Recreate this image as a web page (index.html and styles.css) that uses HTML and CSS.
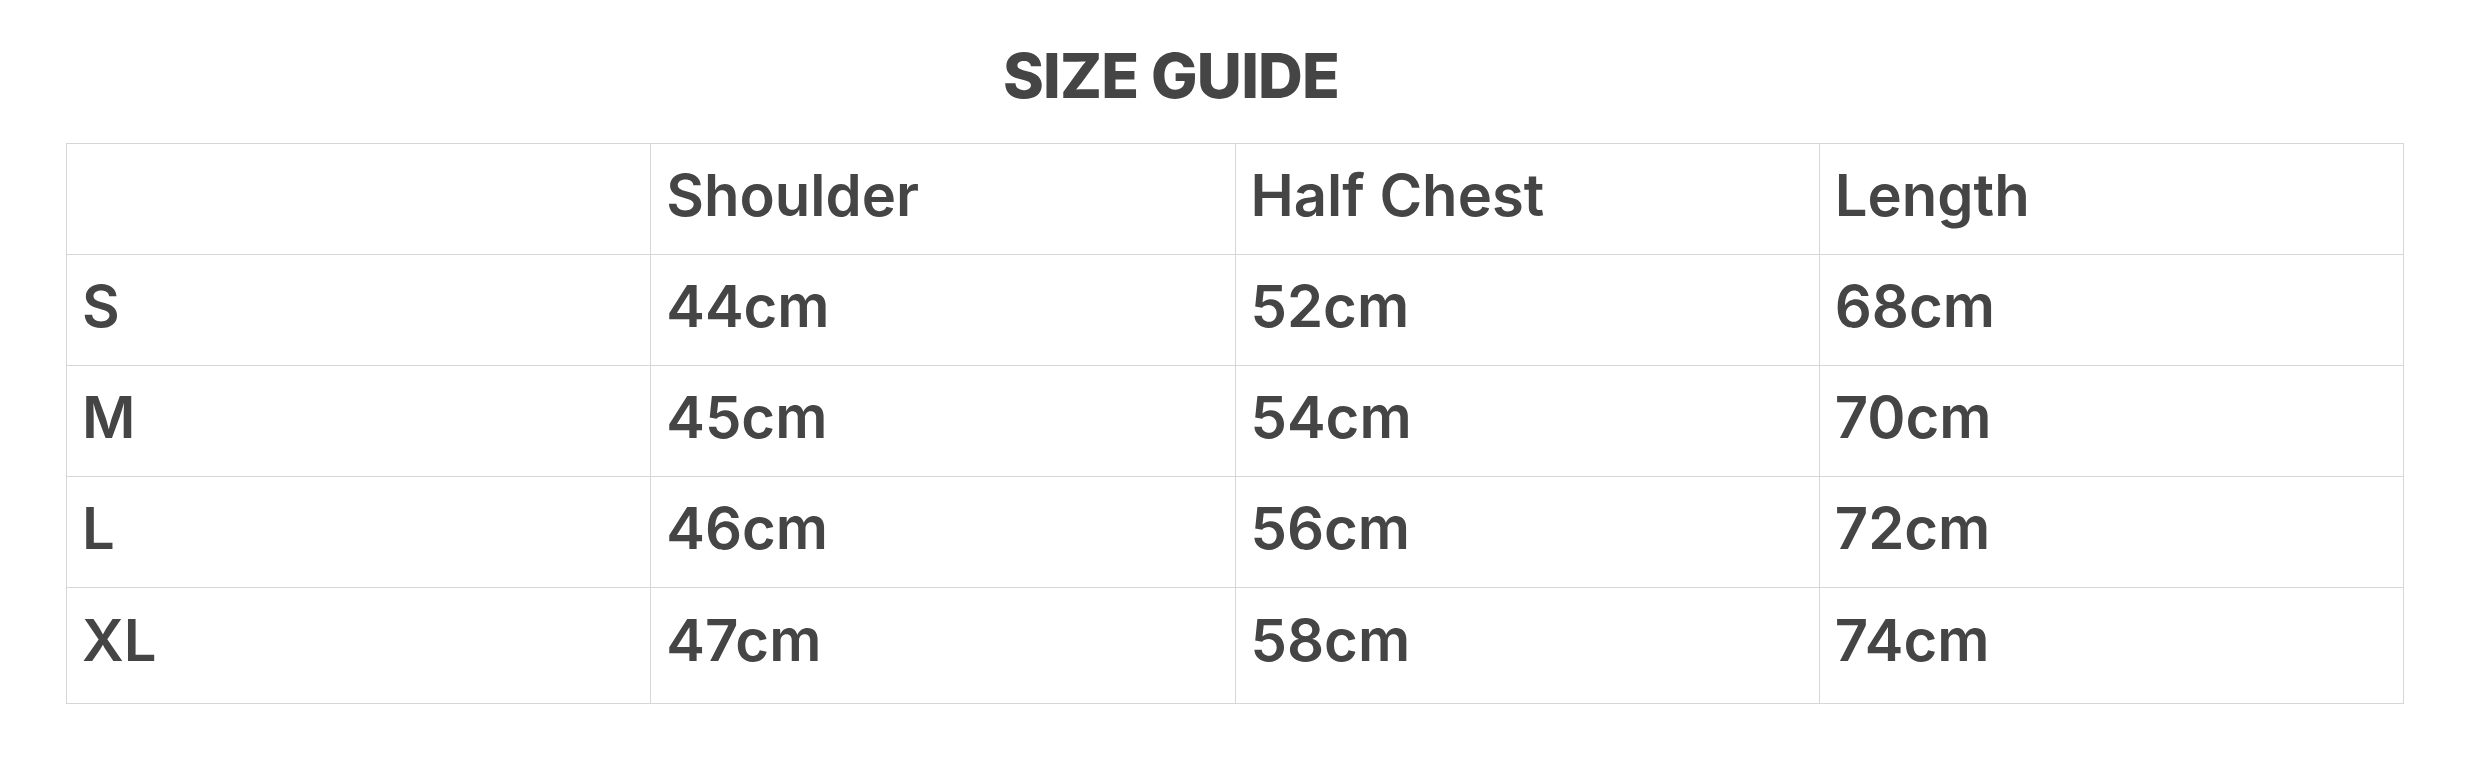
FILE: index.html
```html
<!DOCTYPE html>
<html lang="en">
<head>
<meta charset="utf-8">
<title>Size Guide</title>
<link rel="stylesheet" href="styles.css">
</head>
<body>
<main class="sheet">
  <div class="heading">
    <h1 class="title">SIZE GUIDE</h1>
  </div>
  <table class="sizes">
    <thead>
      <tr>
        <th></th>
        <th>Shoulder</th>
        <th>Half Chest</th>
        <th>Length</th>
      </tr>
    </thead>
    <tbody>
      <tr><td>S</td><td>44cm</td><td>52cm</td><td>68cm</td></tr>
      <tr><td>M</td><td>45cm</td><td>54cm</td><td>70cm</td></tr>
      <tr><td>L</td><td>46cm</td><td>56cm</td><td>72cm</td></tr>
      <tr class="last"><td>XL</td><td>47cm</td><td>58cm</td><td>74cm</td></tr>
    </tbody>
  </table>
</main>
</body>
</html>
```

FILE: styles.css
```css
html, body {
  margin: 0;
  padding: 0;
  background: #ffffff;
}

body {
  font-family: Inter, "Noto Sans", "Liberation Sans", sans-serif;
  color: #454545;
}

.sheet {
  padding: 45px 73px 0 66px;
}

.heading {
  display: flex;
  justify-content: center;
  padding-right: 128px;
  margin-bottom: 37px;
}

.title {
  margin: 0;
  font-size: 62px;
  line-height: 61px;
  font-weight: 800;
  letter-spacing: -0.8px;
  color: #454545;
}

.sizes {
  width: 2338px;
  border-collapse: collapse;
  table-layout: fixed;
}

.sizes th,
.sizes td {
  border: 1px solid #d6d6d6;
  height: 111px;
  padding: 0 0 6px 15px;
  text-align: left;
  vertical-align: middle;
  font-size: 58px;
  font-weight: 600;
  line-height: 1.2;
  box-sizing: border-box;
}

.sizes .last td {
  height: 116px;
  padding-bottom: 9px;
}
```
